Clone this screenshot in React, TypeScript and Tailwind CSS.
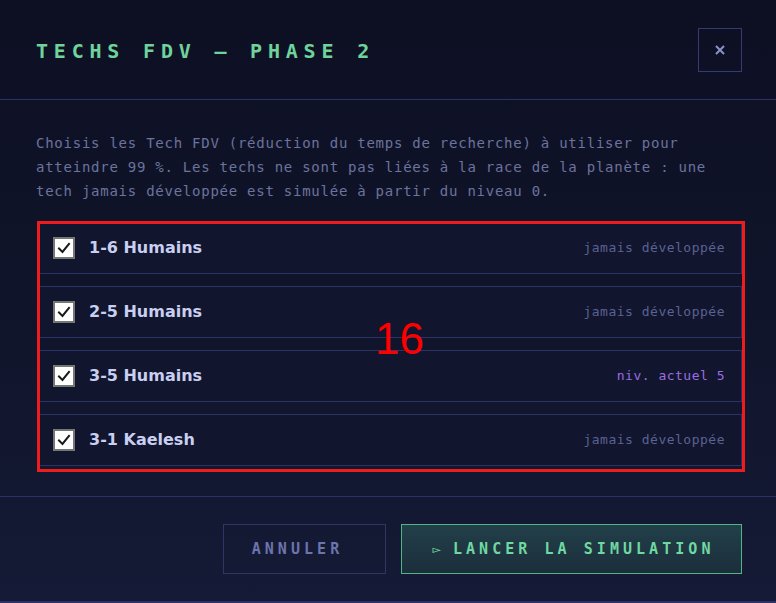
import { useState } from "react"

interface FdvTech {
  id: string
  label: string
  level: number | null
}

const TECHS: FdvTech[] = [
  { id: "1-6", label: "1-6 Humains", level: null },
  { id: "2-5", label: "2-5 Humains", level: null },
  { id: "3-5", label: "3-5 Humains", level: 5 },
  { id: "3-1", label: "3-1 Kaelesh", level: null },
]

const mono = { fontFamily: '"DejaVu Sans Mono", "Liberation Mono", monospace' }
const display = { fontFamily: '"DejaVu Sans", "Liberation Sans", sans-serif' }

function Check({ checked }: { checked: boolean }) {
  return (
    <span className="w-[22px] h-[22px] shrink-0 border-2 border-[#767676] bg-white flex items-center justify-center">
      {checked && (
        <svg width="14" height="14" viewBox="0 0 14 14" fill="none">
          <path d="M2 7.5 L5.5 11 L12 3" stroke="#1a1a1a" strokeWidth="2" strokeLinecap="square" />
        </svg>
      )}
    </span>
  )
}

export default function App() {
  const [selected, setSelected] = useState<string[]>(TECHS.map((t) => t.id))

  const toggle = (id: string) => {
    setSelected((prev) => (prev.includes(id) ? prev.filter((x) => x !== id) : [...prev, id]))
  }

  return (
    <div className="w-[776px] h-[603px] overflow-hidden bg-gradient-to-b from-[#0d1023] via-[#10142a] to-[#151a36] flex flex-col">
      {/* Header */}
      <div className="h-[100px] shrink-0 flex items-center justify-between pl-[36px] pr-[34px] border-b border-[#2c3264]">
        <h2
          className="text-[20px] font-bold uppercase tracking-[0.29em] text-[#6fd39c] mt-[2px]"
          style={mono}
        >
          Techs FDV — Phase 2
        </h2>
        <button className="w-[44px] h-[44px] border border-[#343b70] flex items-center justify-center text-[#8a93c9]">
          <svg width="12" height="12" viewBox="0 0 12 12">
            <path d="M2 2 L10 10 M10 2 L2 10" stroke="currentColor" strokeWidth="2" />
          </svg>
        </button>
      </div>

      {/* Body */}
      <div className="h-[397px] shrink-0 pl-[36px] pr-[34px] pt-[31px] border-b border-[#2c3264]">
        <p className="text-[14px] leading-[24px] tracking-[0.75px] text-[#6c739d]" style={mono}>
          Choisis les Tech FDV (réduction du temps de recherche) à utiliser pour atteindre 99 %. Les
          techs ne sont pas liées à la race de la planète : une tech jamais développée est simulée à
          partir du niveau 0.
        </p>

        <div className="relative mt-[19px] ml-[2px]">
          <div className="h-[246px] overflow-hidden flex flex-col gap-[12px]">
            {TECHS.map((t) => (
              <label
                key={t.id}
                onClick={() => toggle(t.id)}
                className="h-[52px] shrink-0 flex items-center gap-[14px] px-[14px] border border-[#2c3264] bg-[#11152e] cursor-pointer"
              >
                <Check checked={selected.includes(t.id)} />
                <span className="flex-1 text-[16px] font-semibold text-[#c9cff0]" style={display}>
                  {t.label}
                </span>
                {t.level === null ? (
                  <span className="text-[13px] tracking-[0.5px] text-[#5b6291] mr-[2px]" style={mono}>
                    jamais développée
                  </span>
                ) : (
                  <span className="text-[13px] tracking-[0.5px] text-[#9a6ee0] mr-[2px]" style={mono}>
                    niv. actuel {t.level}
                  </span>
                )}
              </label>
            ))}
          </div>

          {/* review marker */}
          <div className="absolute -left-[1px] -top-[1px] -right-[3px] -bottom-[4px] border-[3px] border-[#ee1c1c] pointer-events-none" />
          <span
            className="absolute left-[337px] top-[95px] text-[44px] leading-none text-[#ff0000] pointer-events-none"
            style={{ fontFamily: '"Liberation Sans", Arial, sans-serif' }}
          >
            16
          </span>
        </div>
      </div>

      {/* Footer */}
      <div className="flex-1 flex justify-end items-start gap-[15px] pt-[27px] pr-[34px] border-b-2 border-[#2c3264]">
        <button
          className="w-[163px] h-[50px] border border-[#2f3666] text-[15px] font-bold tracking-[0.27em] text-[#6c74ad] uppercase pr-[14px]"
          style={mono}
        >
          Annuler
        </button>
        <button
          className="w-[341px] h-[50px] border border-[#52b383] bg-gradient-to-b from-[#22404a] to-[#1b2e3b] text-[15px] font-bold tracking-[0.27em] text-[#6fd8a0] uppercase flex items-center justify-center gap-[12px]"
          style={mono}
        >
          <span className="text-[14px] tracking-normal">▻</span>
          <span className="-mr-[4px]">Lancer la simulation</span>
        </button>
      </div>
    </div>
  )
}
